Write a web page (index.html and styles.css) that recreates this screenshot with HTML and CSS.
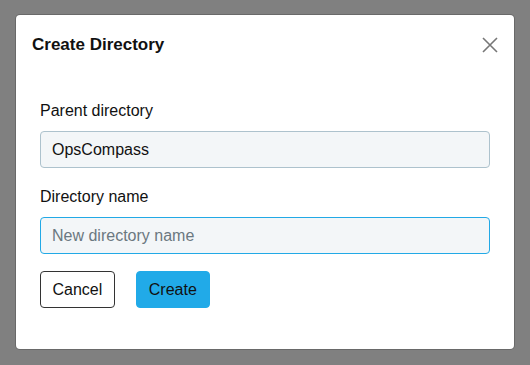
FILE: index.html
```html
<!DOCTYPE html>
<html lang="en">
<head>
<meta charset="utf-8">
<title>Create Directory</title>
<link rel="stylesheet" href="styles.css">
</head>
<body>
  <div class="modal" role="dialog" aria-labelledby="dlg-title">
    <div class="modal-header">
      <h2 class="modal-title" id="dlg-title">Create Directory</h2>
      <button class="close-btn" type="button" aria-label="Close">
        <svg width="16" height="16" viewBox="0 0 16 16" aria-hidden="true">
          <path d="M1 1 L15 15 M15 1 L1 15" stroke="#777777" stroke-width="1.6" fill="none"/>
        </svg>
      </button>
    </div>
    <div class="modal-body">
      <label class="field-label" for="parent">Parent directory</label>
      <input class="field-input" id="parent" type="text" value="OpsCompass" readonly>
      <label class="field-label field-label--spaced" for="dirname">Directory name</label>
      <input class="field-input field-input--focus" id="dirname" type="text" placeholder="New directory name">
      <div class="actions">
        <button class="btn btn-outline" type="button">Cancel</button>
        <button class="btn btn-primary" type="button">Create</button>
      </div>
    </div>
  </div>
</body>
</html>
```

FILE: styles.css
```css
* {
  box-sizing: border-box;
}

html, body {
  margin: 0;
  padding: 0;
}

body {
  width: 530px;
  height: 365px;
  background: #808080;
  padding: 15px 16px;
  font-family: "Liberation Sans", Arial, Helvetica, sans-serif;
  color: #111111;
}

.modal {
  width: 498px;
  height: 334px;
  background: #ffffff;
  border-radius: 4px;
  box-shadow: 0 0 0 1px rgba(0, 0, 0, 0.18);
}

.modal-header {
  display: flex;
  justify-content: space-between;
  align-items: center;
  padding: 20px 16px 0 16px;
}

.modal-title {
  margin: 0;
  font-size: 17px;
  line-height: 20px;
  font-weight: bold;
  color: #111111;
}

.close-btn {
  width: 16px;
  height: 16px;
  padding: 0;
  border: 0;
  background: transparent;
  display: flex;
  cursor: pointer;
}

.modal-body {
  display: flex;
  flex-direction: column;
  align-items: stretch;
  padding: 47px 24px 0 24px;
}

.field-label {
  font-size: 16px;
  line-height: 18px;
  color: #111111;
  margin-bottom: 11px;
}

.field-label--spaced {
  margin-top: 20px;
}

.field-input {
  height: 37px;
  width: 100%;
  padding: 0 11px;
  font-family: inherit;
  font-size: 16px;
  color: #111111;
  background: #f3f6f8;
  border: 1px solid #adc2cd;
  border-radius: 4px;
  outline: none;
}

.field-input--focus {
  border-color: #22a9e6;
}

.field-input::placeholder {
  color: #6b7880;
  opacity: 1;
}

.actions {
  display: flex;
  gap: 21px;
  margin-top: 17px;
}

.btn {
  height: 37px;
  padding: 0 12px;
  font-family: inherit;
  font-size: 16px;
  color: #111111;
  border-radius: 4px;
  cursor: pointer;
}

.btn-outline {
  padding: 0 11.5px;
  background: #ffffff;
  border: 1px solid #333333;
}

.btn-primary {
  background: #21aae8;
  border: 1px solid #21aae8;
}
```
